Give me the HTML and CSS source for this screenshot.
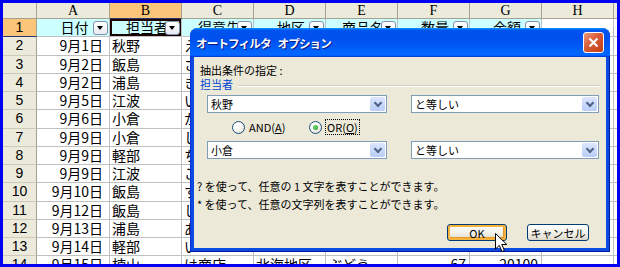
FILE: index.html
```html
<!DOCTYPE html>
<html lang="ja">
  <head>
    <meta charset="UTF-8" />
    <title>オートフィルタ オプション</title>
    <link rel="stylesheet" href="styles.css">
  </head>

  <body>
    <div class="screen">
      <div class="sheet">
        <div class="col corner"></div>
        <div class="col">A</div>
        <div class="col sel">B</div>
        <div class="col">C</div>
        <div class="col">D</div>
        <div class="col">E</div>
        <div class="col">F</div>
        <div class="col">G</div>
        <div class="col">H</div>
        <div class="col"></div>

        <div class="row-no sel">1</div>
        <div class="hd">日付<i class="dd"></i></div>
        <div class="hd active">担当者<i class="dd"></i></div>
        <div class="hd">得意先<i class="dd"></i></div>
        <div class="hd">地区<i class="dd"></i></div>
        <div class="hd">商品名<i class="dd"></i></div>
        <div class="hd">数量<i class="dd"></i></div>
        <div class="hd">金額<i class="dd"></i></div>
        <div></div>
        <div></div>

        <div class="row-no">2</div>
        <div class="date">9月1日</div><div>秋野</div><div>えびす商店</div>
        <div></div><div></div><div></div><div></div><div></div><div></div>

        <div class="row-no">3</div>
        <div class="date">9月2日</div><div>飯島</div><div>さくら商店</div>
        <div></div><div></div><div></div><div></div><div></div><div></div>

        <div class="row-no">4</div>
        <div class="date">9月2日</div><div>浦島</div><div>きりん商店</div>
        <div></div><div></div><div></div><div></div><div></div><div></div>

        <div class="row-no">5</div>
        <div class="date">9月5日</div><div>江波</div><div>いろは商店</div>
        <div></div><div></div><div></div><div></div><div></div><div></div>

        <div class="row-no">6</div>
        <div class="date">9月6日</div><div>小倉</div><div>かもめ商店</div>
        <div></div><div></div><div></div><div></div><div></div><div></div>

        <div class="row-no">7</div>
        <div class="date">9月9日</div><div>小倉</div><div>しらさぎ商店</div>
        <div></div><div></div><div></div><div></div><div></div><div></div>

        <div class="row-no">8</div>
        <div class="date">9月9日</div><div>軽部</div><div>ちどり商店</div>
        <div></div><div></div><div></div><div></div><div></div><div></div>

        <div class="row-no">9</div>
        <div class="date">9月9日</div><div>江波</div><div>こだま商店</div>
        <div></div><div></div><div></div><div></div><div></div><div></div>

        <div class="row-no">10</div>
        <div class="date">9月10日</div><div>飯島</div><div>すずらん商店</div>
        <div></div><div></div><div></div><div></div><div></div><div></div>

        <div class="row-no">11</div>
        <div class="date">9月12日</div><div>飯島</div><div>しらさぎ商店</div>
        <div></div><div></div><div></div><div></div><div></div><div></div>

        <div class="row-no">12</div>
        <div class="date">9月13日</div><div>浦島</div><div>あおい商店</div>
        <div></div><div></div><div></div><div></div><div></div><div></div>

        <div class="row-no">13</div>
        <div class="date">9月14日</div><div>軽部</div><div>い</div>
        <div></div><div></div><div></div><div></div><div></div><div></div>

        <div class="row-no">14</div>
        <div class="date">9月15日</div><div>楠山</div><div>は商店</div>
        <div>北海地区</div><div>ぶどう</div><div class="num">67</div><div class="num">20100</div><div></div><div></div>
      </div>

      <div class="dialog">
        <div class="title-bar">
          <span class="title">オートフィルタ オプション</span>
          <span class="close">
            <svg width="11" height="11" viewBox="0 0 11 11">
              <path d="M1.5 1.5 L9.5 9.5 M9.5 1.5 L1.5 9.5" stroke="#fff" stroke-width="2.2" />
            </svg>
          </span>
        </div>
        <div class="dlg-body">
          <div class="caption">抽出条件の指定 :</div>
          <div class="group"><span>担当者</span><span class="rule"></span></div>

          <div class="cond-row">
            <div class="combo field"><span>秋野</span><i class="arrow"></i></div>
            <div class="combo op"><span>と等しい</span><i class="arrow"></i></div>
          </div>

          <div class="radio-row">
            <label class="radio and"><span class="dot"></span><span>AND(<u>A</u>)</span></label>
            <label class="radio on"><span class="dot"></span><span class="focus">OR(<u>O</u>)</span></label>
          </div>

          <div class="cond-row">
            <div class="combo field"><span>小倉</span><i class="arrow"></i></div>
            <div class="combo op"><span>と等しい</span><i class="arrow"></i></div>
          </div>

          <p class="hint">
            ? を使って、任意の 1 文字を表すことができます。<br />
            * を使って、任意の文字列を表すことができます。
          </p>

          <div class="buttons">
            <button class="btn default">OK</button>
            <button class="btn">キャンセル</button>
          </div>
        </div>
      </div>

      <svg class="cursor" width="13" height="20" viewBox="0 0 13 20">
        <path d="M0.5 0.5 L0.5 16 L4.3 12.4 L7 18.5 L9.4 17.4 L6.8 11.5 L11.8 11.5 Z" fill="#fff" stroke="#000" stroke-width="1" />
      </svg>
    </div>
  </body>
</html>
```

FILE: styles.css
```css
* {
  box-sizing: border-box;
}

body {
  margin: 0;
}

.screen {
  position: relative;
  width: 620px;
  height: 267px;
  padding: 3px;
  background-color: #0000f0;
  overflow: hidden;
}

/* spreadsheet */

.sheet {
  display: grid;
  grid-template-columns: 34px 73px repeat(7, 72px) 1fr;
  grid-template-rows: 16px repeat(14, 18.25px);
  height: 261px;
  background-color: #fff;
  overflow: hidden;
  font-family: "Noto Sans CJK JP", sans-serif;
  font-size: 14px;
  color: #000;
}

.sheet > div {
  border-right: 1px solid #c0c0c0;
  border-bottom: 1px solid #c0c0c0;
  padding: 0 2px;
  line-height: 16px;
  white-space: nowrap;
  overflow: hidden;
}

.sheet > .col {
  background-color: #ebeadb;
  border-right-color: #a5a292;
  border-bottom-color: #a5a292;
  text-align: center;
  font-family: "Liberation Serif", serif;
  font-size: 14px;
  line-height: 15px;
}

.sheet > .row-no {
  background-color: #ebeadb;
  border-right-color: #a5a292;
  border-bottom-color: #cdcabb;
  text-align: center;
  font-family: "Liberation Sans", sans-serif;
  font-size: 14px;
  line-height: 17px;
}

.sheet > .sel {
  background-color: #fcc67a;
  border-bottom-color: #2a356e;
}

.sheet > .hd {
  position: relative;
  background-color: #ccffff;
  text-align: center;
  padding-left: 5px;
  line-height: 17px;
}

.sheet > .active {
  box-shadow: inset 0 0 0 2px #1a0505;
}

.dd {
  position: absolute;
  right: 1px;
  bottom: 1px;
  width: 15px;
  height: 14px;
  border: 1px solid #8090a8;
  border-radius: 3px;
  background: linear-gradient(#fff, #e8ebf2);
}

.dd::after {
  content: "";
  position: absolute;
  left: 3px;
  top: 4px;
  border-left: 3.5px solid transparent;
  border-right: 3.5px solid transparent;
  border-top: 4px solid #000;
}

.sheet > .date {
  text-align: right;
  padding-right: 6px;
}

.sheet > .num {
  text-align: right;
  padding-right: 3px;
}

/* dialog */

.dialog {
  position: absolute;
  left: 190px;
  top: 28px;
  width: 420px;
  height: 224px;
  display: flex;
  flex-direction: column;
  padding: 0 4px 4px;
  background-color: #0a4ae0;
  border-radius: 8px 8px 0 0;
  box-shadow: inset -1px -1px #001c9a, inset 1px 0 #0831d9;
  font-family: "Noto Sans CJK JP", sans-serif;
  font-size: 11px;
  color: #000;
}

.title-bar {
  height: 29px;
  margin: 0 -4px;
  padding: 0 6px;
  display: flex;
  align-items: center;
  justify-content: space-between;
  border-radius: 8px 8px 0 0;
  background: linear-gradient(180deg, #0997ff, #0053ee 8%, #0050ee 40%, #06f 88%, #06f 93%, #005bff 95%, #003dd7 96%, #003dd7);
}

.title {
  color: #fff;
  font-weight: bold;
  font-size: 11.5px;
  letter-spacing: -0.8px;
  word-spacing: 5px;
  text-shadow: 1px 1px #0a1883;
}

.close {
  width: 21px;
  height: 21px;
  display: flex;
  align-items: center;
  justify-content: center;
  border: 1px solid #fff;
  border-radius: 3px;
  background: linear-gradient(135deg, #ee9a7c, #d85a36 45%, #c03e18);
}

.dlg-body {
  flex: 1;
  background-color: #ece9d8;
  padding: 6px 6px 0;
}

.caption {
  line-height: 14px;
}

.group {
  display: flex;
  align-items: center;
  gap: 5px;
  line-height: 14px;
  color: #0046d5;
}

.rule {
  flex: 1;
  margin-top: 3px;
  border-top: 1px solid #d0d0bf;
  border-bottom: 1px solid #fff;
}

.cond-row {
  display: flex;
  gap: 24px;
  margin: 4px 0 0 7px;
}

.cond-row + .radio-row,
.radio-row + .cond-row {
  margin-top: 7px;
}

.combo {
  height: 18px;
  display: flex;
  align-items: center;
  justify-content: space-between;
  padding: 1px 1px 1px 3px;
  border: 1px solid #7f9db9;
  background-color: #fff;
  line-height: 14px;
}

.combo.field {
  width: 180px;
}

.combo.op {
  width: 188px;
}

.arrow {
  position: relative;
  width: 15px;
  height: 14px;
  border-radius: 2px;
  background: linear-gradient(#dce6fd, #b8cdf8);
}

.arrow::after {
  content: "";
  position: absolute;
  left: 5px;
  top: 3px;
  width: 4px;
  height: 4px;
  border-right: 2px solid #4d6185;
  border-bottom: 2px solid #4d6185;
  transform: rotate(45deg);
}

.radio-row {
  display: flex;
  align-items: center;
  height: 14px;
  padding-left: 32px;
}

.radio {
  display: flex;
  align-items: center;
  gap: 4px;
  line-height: 14px;
}

.radio.and {
  width: 77px;
}

.dot {
  width: 13px;
  height: 13px;
  border: 1px solid #1c5180;
  border-radius: 50%;
  background: radial-gradient(circle at 35% 35%, #fff 30%, #d8d4c8);
  display: flex;
  align-items: center;
  justify-content: center;
}

.radio.on .dot::after {
  content: "";
  width: 5px;
  height: 5px;
  border-radius: 50%;
  background: radial-gradient(circle at 40% 40%, #6fd26f, #21a121);
}

.focus {
  outline: 1px dotted #000;
  padding: 0 1px;
}

.hint {
  margin: 18px 0 0 -3px;
  line-height: 18px;
}

.buttons {
  display: flex;
  justify-content: flex-end;
  gap: 20px;
  margin-top: 11px;
  padding-right: 11px;
}

.btn {
  height: 17px;
  padding: 0;
  border: 1px solid #003c74;
  border-radius: 3px;
  background: linear-gradient(#fff, #f3f2ea 50%, #e3e0d2 90%, #d6d0c5);
  font-family: "Noto Sans CJK JP", sans-serif;
  font-size: 11px;
  line-height: 14px;
  color: #000;
  width: 62px;
}

.btn.default {
  width: 60px;
  box-shadow: inset 0 0 0 2px #f8b33f, inset -1px -1px 0 2px #e5972b;
}

.cursor {
  position: absolute;
  left: 495px;
  top: 233px;
}
```
